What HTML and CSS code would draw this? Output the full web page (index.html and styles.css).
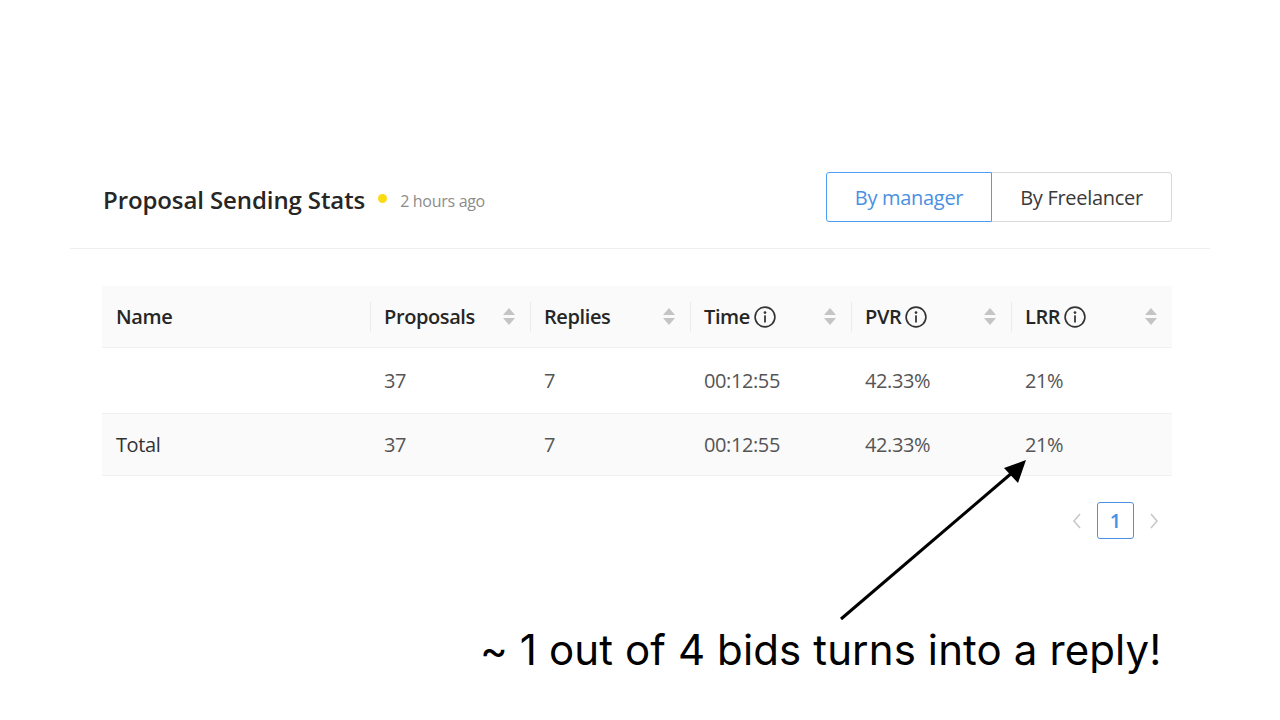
FILE: index.html
```html
<!DOCTYPE html>
<html>
<head>
<meta charset="utf-8">
<link rel="stylesheet" href="styles.css">
</head>
<body>
<div class="page">
  <div class="card">
    <div class="card-head">
      <div class="title-wrap">
        <span class="title">Proposal Sending Stats</span>
        <span class="dot"></span>
        <span class="ago">2 hours ago</span>
      </div>
      <div class="seg">
        <button class="seg-btn active">By manager</button>
        <button class="seg-btn">By Freelancer</button>
      </div>
    </div>
    <div class="table-wrap">
      <div class="table">
        <div class="row head">
          <div class="cell c-name">Name</div>
          <div class="cell sortable sep"><span>Proposals</span><span class="sort"><i class="up"></i><i class="down"></i></span></div>
          <div class="cell sortable sep"><span>Replies</span><span class="sort"><i class="up"></i><i class="down"></i></span></div>
          <div class="cell sortable sep"><span class="lbl">Time<svg class="info" viewBox="0 0 20 20"><circle cx="10" cy="10" r="9" fill="none" stroke="#333" stroke-width="1.5"/><circle cx="10" cy="6" r="1.2" fill="#333"/><rect x="9.2" y="8.5" width="1.6" height="6.5" fill="#333"/></svg></span><span class="sort"><i class="up"></i><i class="down"></i></span></div>
          <div class="cell sortable sep"><span class="lbl">PVR<svg class="info" viewBox="0 0 20 20"><circle cx="10" cy="10" r="9" fill="none" stroke="#333" stroke-width="1.5"/><circle cx="10" cy="6" r="1.2" fill="#333"/><rect x="9.2" y="8.5" width="1.6" height="6.5" fill="#333"/></svg></span><span class="sort"><i class="up"></i><i class="down"></i></span></div>
          <div class="cell sortable sep"><span class="lbl">LRR<svg class="info" viewBox="0 0 20 20"><circle cx="10" cy="10" r="9" fill="none" stroke="#333" stroke-width="1.5"/><circle cx="10" cy="6" r="1.2" fill="#333"/><rect x="9.2" y="8.5" width="1.6" height="6.5" fill="#333"/></svg></span><span class="sort"><i class="up"></i><i class="down"></i></span></div>
        </div>
        <div class="row body r1">
          <div class="cell c-name"></div>
          <div class="cell">37</div>
          <div class="cell">7</div>
          <div class="cell">00:12:55</div>
          <div class="cell">42.33%</div>
          <div class="cell">21%</div>
        </div>
        <div class="row body total">
          <div class="cell c-name">Total</div>
          <div class="cell">37</div>
          <div class="cell">7</div>
          <div class="cell">00:12:55</div>
          <div class="cell">42.33%</div>
          <div class="cell">21%</div>
        </div>
      </div>
      <div class="pager">
        <svg class="chev" viewBox="0 0 12 20"><polyline points="9,3 3,10 9,17" fill="none" stroke="#c8c8c8" stroke-width="1.6"/></svg>
        <span class="pg">1</span>
        <svg class="chev" viewBox="0 0 12 20"><polyline points="3,3 9,10 3,17" fill="none" stroke="#c8c8c8" stroke-width="1.6"/></svg>
      </div>
    </div>
  </div>
  <div class="note">~ 1 out of 4 bids turns into a reply!</div>
  <svg class="pointer" width="1280" height="720" viewBox="0 0 1280 720">
    <line x1="841" y1="619" x2="1013" y2="472" stroke="#000" stroke-width="3"/>
    <polygon points="1026,460 1004,468 1018,483" fill="#000"/>
  </svg>
</div>
</body>
</html>
```
FILE: styles.css
```css
* { box-sizing: border-box; }
html, body { margin: 0; padding: 0; background: #fff; }
body { font-family: "Open Sans", "Noto Sans", sans-serif; }
.page { position: relative; width: 1280px; height: 720px; padding-top: 147px; }
.card { margin: 0 70px; }
.card-head {
  display: flex; align-items: center; justify-content: space-between;
  padding: 25px 38px 26px 33px;
  border-bottom: 1px solid #eeeeee;
}
.title-wrap { display: flex; align-items: center; margin-top: 4px; }
.title { font-size: 24px; font-weight: 600; color: #262626; letter-spacing: -0.1px; }
.dot { width: 9px; height: 9px; border-radius: 50%; background: #fadb14; margin: 0 13px 2px 13px; }
.ago { font-size: 16px; color: #8c8c8c; letter-spacing: -0.3px; margin-top: 3px; }
.seg { display: flex; }
.seg-btn {
  font-family: inherit; font-size: 20px; height: 50px; background: #fff;
  border: 1px solid #d9d9d9; color: #3a3a3a; padding: 0 24px; margin: 0;
  border-radius: 0 3px 3px 0; letter-spacing: -0.3px;
}
.seg-btn.active {
  border-color: #4a9ff5; color: #4a90e2; border-radius: 3px 0 0 3px; width: 166px; padding: 0;
  position: relative; z-index: 1;
}
.seg-btn + .seg-btn { margin-left: -1px; width: 181px; padding: 0; }
.table-wrap { padding: 37px 38px 0 32px; }
.table { width: 1070px; }
.row { display: grid; grid-template-columns: 268px 160px 160px 161px 160px 161px; }
.cell {
  display: flex; align-items: center; padding: 0 14px;
  font-size: 20px; color: #555; letter-spacing: -0.4px;
}
.row.head { height: 62px; background: #fafafa; border-bottom: 1px solid #f0f0f0; }
.row.head .cell { color: #262626; font-weight: 600; position: relative; }
.row.body { border-bottom: 1px solid #f0f0f0; }
.row.r1 { height: 66px; }
.row.total { height: 62px; background: #fafafa; }
.row.total .c-name { color: #333; }
.sep::before {
  content: ""; position: absolute; left: 0; top: 50%; width: 1px; height: 30px;
  margin-top: -15px; background: #ebebeb;
}
.sortable { justify-content: space-between; padding-right: 14px; }
.lbl { display: flex; align-items: center; }
.info { width: 22px; height: 22px; margin-left: 4px; }
.sort { display: flex; flex-direction: column; gap: 3px; margin-right: 1px; }
.sort i { display: block; width: 0; height: 0; border-left: 6px solid transparent; border-right: 6px solid transparent; }
.sort .up { border-bottom: 7px solid #c4c4c4; }
.sort .down { border-top: 7px solid #c4c4c4; }
.pager { display: flex; justify-content: flex-end; align-items: center; margin-top: 26px; width: 1070px; padding-right: 12px; gap: 14px; }
.chev { width: 12px; height: 20px; }
.pg {
  width: 37px; height: 37px; border: 1.5px solid #4a90e2; border-radius: 3px;
  display: flex; align-items: center; justify-content: center;
  color: #4a90e2; font-size: 20px; font-weight: 600;
}
.note {
  position: absolute; left: 480px; top: 629px; line-height: 42px;
  font-family: Inter, Roboto, sans-serif; font-size: 42px; color: #000;
  letter-spacing: 0.12px; white-space: nowrap;
}
.pointer { position: absolute; left: 0; top: 0; pointer-events: none; }
```
